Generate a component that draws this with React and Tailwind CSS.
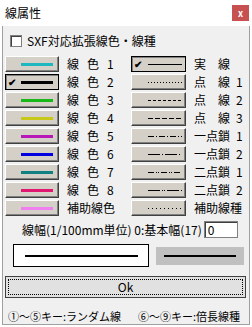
import React from "react";

const colorRows = [
  { label: ["線", "色", "1"], color: "#20b8c0" },
  { label: ["線", "色", "2"], color: "#000000", checked: true },
  { label: ["線", "色", "3"], color: "#18b818" },
  { label: ["線", "色", "4"], color: "#c8c818" },
  { label: ["線", "色", "5"], color: "#b818b8" },
  { label: ["線", "色", "6"], color: "#0000e0" },
  { label: ["線", "色", "7"], color: "#108080" },
  { label: ["線", "色", "8"], color: "#e01870" },
  { label: ["補助線色"], color: "#f080f0" },
];

const typeRows = [
  { a: "実", b: "線", dash: "", checked: true },
  { a: "点", b: "線", c: "1", dash: "1 2" },
  { a: "点", b: "線", c: "2", dash: "3 2" },
  { a: "点", b: "線", c: "3", dash: "5 2" },
  { a: "一点鎖", c: "1", dash: "6 2 1 2" },
  { a: "一点鎖", c: "2", dash: "12 2 1 2" },
  { a: "二点鎖", c: "1", dash: "6 2 1 1 1 2" },
  { a: "二点鎖", c: "2", dash: "12 2 1 1 1 2" },
  { a: "補助線種", dash: "1 3" },
];

function Btn({ checked, children, width }) {
  return (
    <div
      className={`relative shrink-0 flex items-center h-[16px] ${width} bg-[#d4d0c8] ${
        checked
          ? "border border-black shadow-[inset_1px_1px_0_#808080]"
          : "border border-t-white border-l-white border-r-[#404040] border-b-[#404040] shadow-[inset_-1px_-1px_0_#808080]"
      }`}
    >
      {checked && (
        <span className="absolute left-[2px] top-[0px] text-[10px] leading-[14px] font-bold text-black">
          ✔
        </span>
      )}
      {children}
    </div>
  );
}

export default function App() {
  return (
    <div
      className="w-[252px] h-[327px] bg-white text-[12px] leading-none text-black overflow-hidden"
      style={{ fontFamily: '"Noto Sans CJK JP", "Liberation Sans", sans-serif' }}
    >
      {/* title */}
      <div className="h-[26px] flex items-center justify-between pl-[5px] pr-[3px]">
        <span className="text-[12px]">線属性</span>
        <div className="w-[17px] h-[16px] bg-[#c75050] flex items-center justify-center text-white text-[9px] font-bold">
          x
        </div>
      </div>

      <div className="mx-[2px] h-[299px] border border-t-0 border-[#a0a0a0] bg-[#f0f0f0]">
        {/* checkbox */}
        <div className="flex items-center gap-[5px] pl-[7px] pt-[9px] h-[21px]">
          <div className="w-[12px] h-[12px] bg-white border border-[#808080] shadow-[inset_1px_1px_0_#404040]" />
          <span className="whitespace-nowrap">SXF対応拡張線色・線種</span>
        </div>

        {/* buttons */}
        <div className="flex pl-[2px] mt-[9px]">
          <div className="flex flex-col gap-[2px] w-[126px]">
            {colorRows.map((r, i) => (
              <div key={i} className="flex items-center h-[16px]">
                <Btn checked={r.checked} width="w-[54px]">
                  <div className="ml-[15px] w-[32px] h-[3px]" style={{ background: r.color }} />
                </Btn>
                <div className="ml-[8px] whitespace-nowrap">
                  {r.label.length === 1 ? (
                    <span>{r.label[0]}</span>
                  ) : (
                    <span className="flex">
                      <span className="w-[20px]">{r.label[0]}</span>
                      <span className="w-[20px]">{r.label[1]}</span>
                      <span>{r.label[2]}</span>
                    </span>
                  )}
                </div>
              </div>
            ))}
          </div>
          <div className="flex flex-col gap-[2px]">
            {typeRows.map((r, i) => (
              <div key={i} className="flex items-center h-[16px]">
                <Btn checked={r.checked} width="w-[55px]">
                  <svg width="34" height="3" className="ml-[16px]">
                    <line
                      x1="0"
                      y1="1.5"
                      x2="34"
                      y2="1.5"
                      stroke="#000"
                      strokeWidth="1"
                      strokeDasharray={r.dash || undefined}
                    />
                  </svg>
                </Btn>
                <div className="ml-[8px] whitespace-nowrap flex">
                  {r.b ? (
                    <>
                      <span className="w-[24px]">{r.a}</span>
                      <span className="w-[18px]">{r.b}</span>
                      {r.c && <span>{r.c}</span>}
                    </>
                  ) : r.c ? (
                    <>
                      <span className="w-[42px]">{r.a}</span>
                      <span>{r.c}</span>
                    </>
                  ) : (
                    <span>{r.a}</span>
                  )}
                </div>
              </div>
            ))}
          </div>
        </div>

        {/* width */}
        <div className="flex items-center h-[17px] mt-[5px] pl-[19px]">
          <span className="whitespace-nowrap">線幅(1/100mm単位) 0:基本幅(17)</span>
          <div className="ml-[2px] w-[34px] h-[17px] bg-white border border-[#808080] shadow-[inset_1px_1px_0_#404040] pl-[3px] flex items-center">
            0
          </div>
        </div>

        {/* previews */}
        <div className="flex items-center mt-[6px] pl-[10px] h-[23px]">
          <div className="w-[136px] h-[23px] bg-white border border-black flex items-center justify-center">
            <div className="w-[113px] h-[2px] bg-black" />
          </div>
          <div className="ml-[7px] w-[88px] h-[18px] bg-[#c0c0c0] flex items-center justify-center">
            <div className="w-[72px] h-[2px] bg-black" />
          </div>
        </div>

        {/* ok */}
        <div className="mt-[9px] ml-[2px] w-[241px] h-[22px] bg-[#e1e1e1] border border-[#404040] p-[2px]">
          <div className="w-full h-full border border-dotted border-black flex items-center justify-center">
            Ok
          </div>
        </div>

        {/* hints */}
        <div className="flex justify-between pl-[5px] pr-[9px] mt-[13px] text-[11px] whitespace-nowrap">
          <span>①～⑤キー:ランダム線</span>
          <span>⑥～⑨キー:倍長線種</span>
        </div>
      </div>
    </div>
  );
}
